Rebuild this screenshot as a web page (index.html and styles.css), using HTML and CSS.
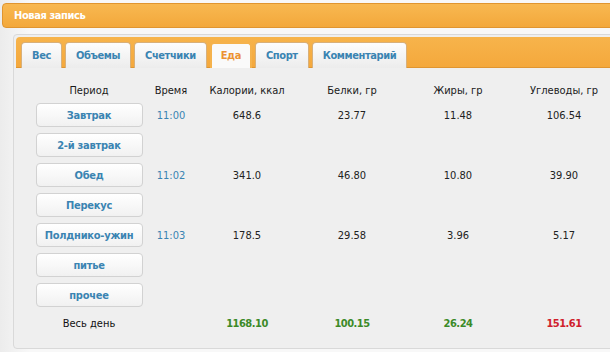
FILE: index.html
```html
<!DOCTYPE html>
<html lang="ru">
<head>
    <meta charset="UTF-8">
    <title>Новая запись</title>
    <link rel="stylesheet" href="styles.css">
</head>
<body>
    <div class="page-header">Новая запись</div>

    <div class="entry-panel">
        <div class="tab-bar">
            <div class="tab">Вес</div>
            <div class="tab">Объемы</div>
            <div class="tab">Счетчики</div>
            <div class="tab active">Еда</div>
            <div class="tab">Спорт</div>
            <div class="tab">Комментарий</div>
        </div>

        <div class="food-table">
            <div class="cell head">Период</div>
            <div class="cell head">Время</div>
            <div class="cell head">Калории, ккал</div>
            <div class="cell head">Белки, гр</div>
            <div class="cell head">Жиры, гр</div>
            <div class="cell head">Углеводы, гр</div>

            <div class="cell"><span class="meal-btn">Завтрак</span></div>
            <div class="cell time">11:00</div>
            <div class="cell">648.6</div>
            <div class="cell">23.77</div>
            <div class="cell">11.48</div>
            <div class="cell">106.54</div>

            <div class="cell"><span class="meal-btn">2-й завтрак</span></div>
            <div class="cell"></div>
            <div class="cell"></div>
            <div class="cell"></div>
            <div class="cell"></div>
            <div class="cell"></div>

            <div class="cell"><span class="meal-btn">Обед</span></div>
            <div class="cell time">11:02</div>
            <div class="cell">341.0</div>
            <div class="cell">46.80</div>
            <div class="cell">10.80</div>
            <div class="cell">39.90</div>

            <div class="cell"><span class="meal-btn">Перекус</span></div>
            <div class="cell"></div>
            <div class="cell"></div>
            <div class="cell"></div>
            <div class="cell"></div>
            <div class="cell"></div>

            <div class="cell"><span class="meal-btn">Полднико-ужин</span></div>
            <div class="cell time">11:03</div>
            <div class="cell">178.5</div>
            <div class="cell">29.58</div>
            <div class="cell">3.96</div>
            <div class="cell">5.17</div>

            <div class="cell"><span class="meal-btn">питье</span></div>
            <div class="cell"></div>
            <div class="cell"></div>
            <div class="cell"></div>
            <div class="cell"></div>
            <div class="cell"></div>

            <div class="cell"><span class="meal-btn">прочее</span></div>
            <div class="cell"></div>
            <div class="cell"></div>
            <div class="cell"></div>
            <div class="cell"></div>
            <div class="cell"></div>

            <div class="cell total">Весь день</div>
            <div class="cell total"></div>
            <div class="cell total good">1168.10</div>
            <div class="cell total good">100.15</div>
            <div class="cell total good">26.24</div>
            <div class="cell total bad">151.61</div>
        </div>
    </div>
</body>
</html>
```

FILE: styles.css
```css
:root {
    --orange: #f5ad42;
    --orange-dark: #e09530;
    --link: #3a84b2;
    --text: #222222;
}

* {
    margin: 0;
    padding: 0;
    box-sizing: border-box;
}

body {
    background: linear-gradient(90deg, #ececec, #f8f8f8 30px, #f8f8f8);
    font-family: 'DejaVu Sans Condensed', 'DejaVu Sans', sans-serif;
    font-size: 11px;
    color: var(--text);
    padding: 3px 0 0 2px;
    overflow: hidden;
    width: 610px;
    height: 352px;
}

.page-header {
    height: 25px;
    width: calc(100% + 20px);
    background: linear-gradient(#f8b851, #f3a83b);
    border: 1px solid var(--orange-dark);
    border-radius: 4px 0 0 4px;
    color: #fff;
    font-weight: bold;
    font-size: 11px;
    letter-spacing: -0.4px;
    line-height: 24px;
    padding-left: 11px;
}

.entry-panel {
    margin: 6px 0 0 11px;
    width: calc(100% + 20px);
    background: #efefef;
    border: 1px solid #d9d9d9;
    border-radius: 4px;
    padding-top: 2px;
}

.tab-bar {
    margin-left: 2px;
    height: 31px;
    background: linear-gradient(#f7b44b, #f4a83c);
    border-bottom: 1px solid var(--orange-dark);
    border-radius: 4px 0 0 0;
    display: flex;
    align-items: flex-end;
    gap: 3px;
    padding-left: 5px;
}

.tab {
    height: 26px;
    padding: 0 10px;
    margin-bottom: -1px;
    background: linear-gradient(#fdfdfd, #ececec);
    border: 1px solid #d8b07a;
    border-bottom: none;
    border-radius: 4px 4px 0 0;
    color: var(--link);
    font-weight: bold;
    letter-spacing: -0.4px;
    line-height: 26px;
}

.tab.active {
    background: #fafafa;
    border: 2px solid #f5b24c;
    border-bottom: none;
    color: #ec9232;
    line-height: 24px;
    padding: 0 9px;
}

.food-table {
    display: grid;
    grid-template-columns: 120px 44px 108px 102px 110px 102px;
    grid-template-rows: 20px repeat(7, 30px) 26px;
    padding: 12px 0 12px 15px;
}

.cell {
    display: flex;
    align-items: center;
    justify-content: center;
    white-space: nowrap;
}

.cell.head {
    color: #1a1a1a;
}

.cell.time {
    color: var(--link);
}

.meal-btn {
    width: 107px;
    height: 24px;
    display: flex;
    align-items: center;
    justify-content: center;
    background: linear-gradient(#ffffff, #f1f1f1);
    border: 1px solid #d2d2d2;
    border-radius: 4px;
    color: var(--link);
    font-weight: bold;
    letter-spacing: -0.25px;
}

.cell.total {
    color: #111;
}

.cell.good,
.cell.bad {
    font-weight: bold;
    letter-spacing: -0.5px;
}

.cell.good {
    color: #3c8a28;
}

.cell.bad {
    color: #d0202c;
}
```
